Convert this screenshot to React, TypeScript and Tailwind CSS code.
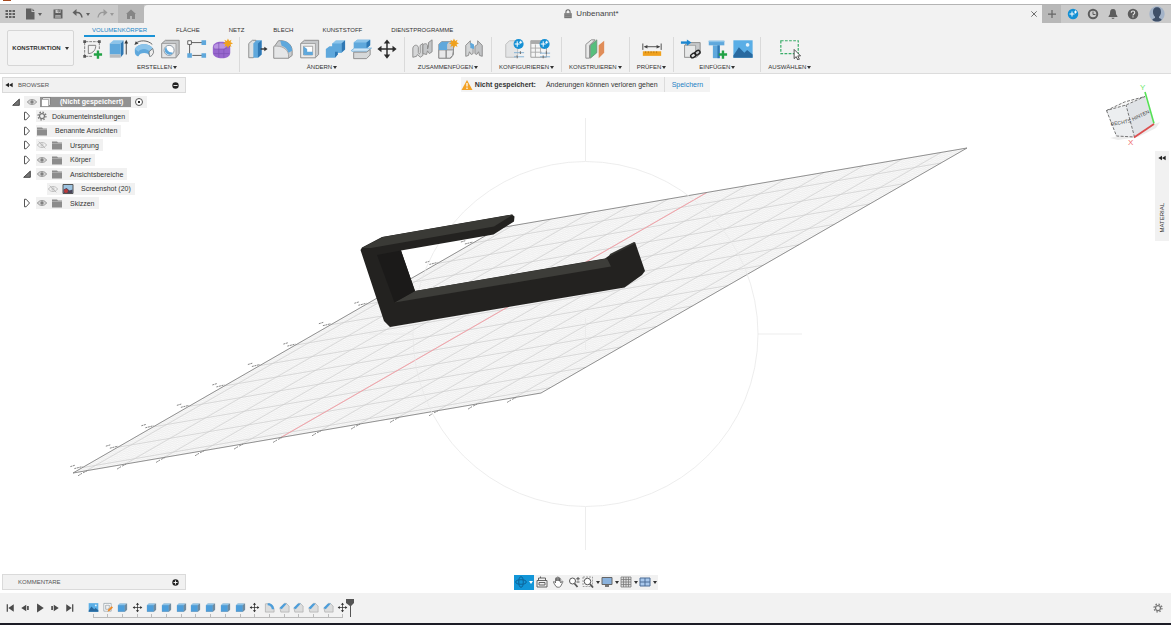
import type { ReactNode } from 'react'

type Point = [number, number]

const BLUE = '#5fa8dc'
const BLUE_LIGHT = '#8cc4ea'
const BLUE_DARK = '#2f78b4'
const GRAY_LINE = '#8a8a8a'

/* ---------- small shared pieces ---------- */

function Icon({ children, className = 'size-6' }: { children: ReactNode; className?: string }) {
  return (
    <svg viewBox="0 0 24 24" className={className} fill="none" aria-hidden="true">
      {children}
    </svg>
  )
}

function Caret({ className = 'text-[#333]' }: { className?: string }) {
  return (
    <svg viewBox="0 0 4 3" className={`w-1 h-[3px] shrink-0 ${className}`} aria-hidden="true">
      <path d="M0 0h4L2 3z" fill="currentColor" />
    </svg>
  )
}

function Star() {
  return (
    <path
      d="M18.500 0.500l1.300 2.700 2.600-1.200-1.100 2.700 2.700 1.100-2.700 1.200 1.100 2.700-2.600-1.200-1.300 2.700-1.200-2.700-2.700 1.200 1.200-2.700-2.700-1.200 2.700-1.100-1.200-2.700 2.700 1.200z"
      fill="#f0a11d"
    />
  )
}

function SparkBadge() {
  return (
    <>
      <circle cx="17" cy="6.500" r="5.500" fill="#1590d4" />
      <path d="M15.500 3.500v6M12.800 6.500h5.400M19.300 3v3.400M17.600 4.700H21" stroke="#fff" strokeWidth="1.100" />
    </>
  )
}

function MoveArrows() {
  return (
    <>
      <path d="M12 4v16M4 12h16" stroke="#2b2b2b" strokeWidth="1.600" />
      <path d="M12 1.500l3.500 4.500h-7zM12 22.500l3.500-4.500h-7zM1.500 12l4.500-3.500v7zM22.500 12l-4.500-3.500v7z" fill="#2b2b2b" />
    </>
  )
}

function PlusMark() {
  return <path d="M18.500 13.500v9M14 18h9" stroke="#22a245" strokeWidth="2.600" />
}

/* ---------- ribbon icons ---------- */

const icons: Record<string, ReactNode> = {
  sketch: (
    <>
      <path d="M4 5v14M5 4h14M5 20h8M20 5v8" stroke="#777" strokeWidth="1" strokeDasharray="3 1" />
      <path d="M8 17V8h8c.5 4-2.500 9-8 9z" stroke="#777" strokeWidth="1" />
      <path d="M2.500 2.500h3v3h-3zM18.500 2.500h3v3h-3zM2.500 18.500h3v3h-3z" fill="#555" />
      <PlusMark />
    </>
  ),
  extrude: (
    <>
      <path d="M3 6l4-3.500h11L15 6z" fill={BLUE_LIGHT} />
      <path d="M15 6l3-3.500v15L15 21z" fill={BLUE_DARK} />
      <path d="M3 6h12v12H3z" fill={BLUE} />
      <path d="M3 18h12v3.500H3z" fill="#b9bcbf" />
      <path d="M21 18V5" stroke="#333" />
      <path d="M21 2l2 4h-4z" fill="#333" />
    </>
  ),
  revolve: (
    <>
      <path d="M2 12C5 5 19 5 22 12v4c-1 3-3 5-4 4-.5-5-11-5-12 0-3 0-4-3-4-5z" fill={BLUE} />
      <path d="M2 12C5 5 19 5 22 12l-4 3c-2-4-10-4-12 0z" fill={BLUE_LIGHT} />
      <path d="M17.500 15l4-3.500 1 4c-1 3-2.500 5-4.500 4.500z" fill="#eee" stroke="#666" strokeWidth=".8" />
      <path d="M3 6c4-4 13-4 18 1" stroke="#444" strokeWidth=".9" />
      <path d="M1.500 7.500L3 3.500 6 6z" fill="#444" />
    </>
  ),
  hole: (
    <>
      <path d="M3 6l4-3.500h15V17l-3.500 4.500H3z" fill="#c4c6c8" stroke={GRAY_LINE} />
      <path d="M3 6h15.500v15.500H3z" fill="#e4e5e6" stroke={GRAY_LINE} strokeWidth=".7" />
      <circle cx="11" cy="13.500" r="5.500" fill="#fff" stroke="#8793a0" />
      <path d="M8 9.500a5 5 0 1 0 7.500 6.500c-4 0-7-2-7.500-6.500z" fill={BLUE} />
    </>
  ),
  pattern: (
    <>
      <path d="M6 5h13M5 6v13M8 19h12" stroke="#555" strokeWidth="1" />
      <path d="M3 3h4v4H3z" fill="#fff" stroke="#555" />
      <path d="M18 2.500h5v5h-5zM2.500 16.500h5v5h-5zM18 16.500h5v5h-5z" fill={BLUE} />
    </>
  ),
  form: (
    <>
      <path d="M2 10c0-4 4-6 9-6s10 2 10 7v5c0 4-4 6-9 6S2 20 2 16z" fill="#9867ce" />
      <path d="M3 9c2-4 12-4 15-1l-4 4H4z" fill="#b994e2" />
      <path d="M3 12h12l6-3M14 12v9.500M8.500 5v16M3 17h17" stroke="#7d52b4" strokeWidth=".7" />
      <Star />
    </>
  ),
  pressPull: (
    <>
      <path d="M3 6l4-3.500h4V18l-3 3.500H3z" fill="#dfe1e2" stroke={GRAY_LINE} />
      <path d="M8 6l3.500-3.500H17V18l-4 3.500H8z" fill={BLUE} />
      <path d="M13 6l4-3.500V18l-4 3.500z" fill={BLUE_DARK} />
      <path d="M16 12h5" stroke="#333" strokeWidth="1.500" />
      <path d="M23.500 12L20 9.500v5z" fill="#333" />
    </>
  ),
  fillet: (
    <>
      <path d="M2 10l5-7c7-1 15 3 15 11v5l-4 3H2z" fill="#c9cbcd" stroke={GRAY_LINE} />
      <path d="M2 9c9-1 15 3 16 9v4H2z" fill="#e5e6e7" stroke={GRAY_LINE} strokeWidth=".7" />
      <path d="M9 3c7-1 13 4 13 11l-4 2c-1-4-4-6.500-7.500-7.500z" fill={BLUE} />
    </>
  ),
  shell: (
    <>
      <path d="M3 6l4-3.500h15.500V18L19 21.500H3z" fill="#c6c8ca" stroke={GRAY_LINE} />
      <path d="M3 6h16v15.500H3z" fill="#ececec" stroke={GRAY_LINE} strokeWidth=".7" />
      <path d="M6 9h10v9.500H6z" fill="#fff" stroke={GRAY_LINE} strokeWidth=".8" />
      <path d="M6 9l4 3v4l-4 2.500z" fill={BLUE} />
      <path d="M6 18.500l4-3.500h6v3.500z" fill={BLUE} />
    </>
  ),
  combine: (
    <>
      <path d="M9 6l4-3.500h10v10L19 16H9z" fill={BLUE_LIGHT} />
      <path d="M19 6l4-3.500v10L19 16z" fill={BLUE_DARK} />
      <path d="M9 6h10v10h-4v2l-3 3.500H2V12l4-3h3z" fill={BLUE} />
      <path d="M12 15h3v3l-3 3.500z" fill={BLUE_DARK} />
    </>
  ),
  split: (
    <>
      <path d="M4 5l4-3h14v6l-4 3.500H4z" fill={BLUE} />
      <path d="M4 5l4-3h14l-4 3z" fill={BLUE_LIGHT} />
      <path d="M18 5l4-3v6l-4 3.500z" fill={BLUE_DARK} />
      <path d="M1.500 13.500L5 11h18.500L19 14.500H2z" fill="#cfe6f6" stroke={BLUE} strokeWidth=".8" />
      <path d="M4 15.500h14l4-3v6l-4 4H4z" fill="#d6d8d9" stroke={GRAY_LINE} />
    </>
  ),
  move: <MoveArrows />,
  joint: (
    <>
      <path d="M2 21V11c1-4 5-4 6-1v6c1 2 1 2 2 0V8l3-2v13l-3 2-3-3-1 2z" fill="#d6d7d8" stroke={GRAY_LINE} />
      <path d="M13 17V9c0-3 4-4 5-1v4l1-2V5l4-3v13l-3 2-2-3-1 4z" fill="#c4c6c8" stroke={GRAY_LINE} />
    </>
  ),
  newComponent: (
    <>
      <path d="M2 7l3-3h13v14l-3 4H2z" fill="#c9cbcd" stroke={GRAY_LINE} />
      <path d="M2 13h8v9H2zM10 13h8l-1 6-3 3h-4z" fill="#e8e8e9" stroke={GRAY_LINE} />
      <path d="M2 7l3-3h8l-2 3v6H2z" fill={BLUE} />
      <Star />
    </>
  ),
  rigidJoint: (
    <>
      <path d="M3 20V8l5-5v4l3 2v8l-2 1-2-3-1 4z" fill="#d3d5d6" stroke={GRAY_LINE} />
      <path d="M21 20V8l-5-5v4l-3 2v8l2 1 2-3 1 4z" fill="#c2c4c6" stroke={GRAY_LINE} />
      <path d="M8 5l4 2v5l-4-1z" fill={BLUE} />
    </>
  ),
  configure: (
    <>
      <path d="M3 7l4-4h9v15l-2 3H3z" fill="#e3e4e5" stroke="#bbb" />
      <path d="M12 16h11M12 20.500h11" stroke="#7eaed2" />
      <path d="M19 14.500v3M15.500 19v3" stroke="#777" strokeWidth="1.300" />
      <SparkBadge />
    </>
  ),
  configTable: (
    <>
      <path d="M2 3h17v18H2z" fill="#f5f5f5" stroke="#999" />
      <path d="M2 3h12v3.500H2z" fill="#aaa" />
      <path d="M2 11h15M2 15.500h12M7 7v14M12.500 7v10" stroke="#aaa" />
      <path d="M12 16.500h11M12 20.500h11" stroke="#7eaed2" />
      <path d="M19 14.500v3M15.500 19v3" stroke="#777" strokeWidth="1.300" />
      <SparkBadge />
    </>
  ),
  plane: (
    <>
      <path d="M2 7l6-5h4L6 8v14H2z" fill="#e8e8e8" stroke={GRAY_LINE} />
      <path d="M7 8l7-6v14l-7 6z" fill="#56bf7d" stroke="#6e8576" strokeWidth=".8" />
      <path d="M16 8l6-5v13l-6 6z" fill="#e08d59" />
    </>
  ),
  measure: (
    <>
      <path d="M2 6v7M22 6v7M4 9.500h16" stroke="#444" />
      <path d="M3 9.500l4-2v4zM21 9.500l-4-2v4z" fill="#444" />
      <path d="M2 14.500h20v5H2z" fill="#f0a11d" />
      <path d="M5 14.500v2M8 14.500v2M11 14.500v2M14 14.500v2M17 14.500v2" stroke="#b06f08" strokeWidth=".8" />
    </>
  ),
  insertDerive: (
    <>
      <path d="M5 8l4-3h13v12l-4 4H5z" fill="#c6c8ca" stroke={GRAY_LINE} />
      <path d="M5 8h12v13H5z" fill="#e7e8e8" stroke={GRAY_LINE} strokeWidth=".7" />
      <path d="M1 5h8" stroke="#1c86d0" strokeWidth="2.600" />
      <path d="M12.500 5L7.500 1.500v7z" fill="#1c86d0" />
      <g stroke="#222" strokeWidth="1.500">
        <rect x="11.500" y="17" width="6" height="4" rx="2" transform="rotate(-35 14.500 19)" />
        <rect x="16" y="14" width="6" height="4" rx="2" transform="rotate(-35 19 16)" />
      </g>
    </>
  ),
  fastener: (
    <>
      <path d="M3 3h17v5H3z" fill={BLUE} />
      <path d="M3 3h17v1.500H3z" fill={BLUE_LIGHT} />
      <path d="M7.500 8H15v14H7.500z" fill={BLUE} />
      <path d="M12.500 8H15v14h-2.500z" fill={BLUE_DARK} />
      <PlusMark />
    </>
  ),
  picture: (
    <>
      <path d="M1.500 2.500h21v19h-21z" fill="#5aaee6" />
      <circle cx="17" cy="7.500" r="2" fill="#e5f2fb" />
      <path d="M1.500 19l6-9 6 6 3-3 6 5v3.500h-21z" fill="#28699f" />
    </>
  ),
  select: (
    <>
      <path d="M2 3h19v14H2z" stroke="#39ad69" strokeWidth="1.300" strokeDasharray="3 1.500" />
      <path d="M16.500 12.500v10l2.300-2.200 1.700 3.700 1.700-.8-1.700-3.700h3z" fill="#fff" stroke="#333" strokeWidth=".9" />
    </>
  ),
  cube: (
    <>
      <path d="M2 7l4-4h16v14l-5 5H2z" fill="#a9b3ba" />
      <path d="M2 7l4-4h15l-4 4z" fill={BLUE_LIGHT} />
      <path d="M2 7h15v14H2z" fill="#4c9edb" />
      <path d="M17 7l5-4v14l-5 4z" fill="#6f8ba0" />
    </>
  ),
  sketchSmall: (
    <>
      <path d="M4 3h16v17H4zM8 7v9h4c5 0 4-6 4-9z" fill="#fff" stroke="#8b97a0" strokeWidth="1.500" />
      <path d="M12 21l2-5 7-7 3 3-7 7z" fill="#ec8a28" />
    </>
  ),
  filletSmall: (
    <>
      <path d="M3 4c10-2 19 4 19 13v5H3z" fill="#dcdddd" stroke="#aaa" strokeWidth="1.500" />
      <path d="M8 3c8-1 14 5 14 13h-5c0-5-4-9-9-9z" fill="#4c9edb" />
    </>
  ),
  chamferSmall: (
    <>
      <path d="M2 13L12 3h4l6 6v13H4z" fill="#dcdddd" stroke="#aaa" strokeWidth="1.500" />
      <path d="M1 13L11 3h6L6 16z" fill="#4c9edb" />
    </>
  ),
}

const ribbonTabs = ['VOLUMENKÖRPER', 'FLÄCHE', 'NETZ', 'BLECH', 'KUNSTSTOFF', 'DIENSTPROGRAMME']

const toolGroups = [
  { label: 'ERSTELLEN', tools: ['sketch', 'extrude', 'revolve', 'hole', 'pattern', 'form'] },
  { label: 'ÄNDERN', tools: ['pressPull', 'fillet', 'shell', 'combine', 'split', 'move'] },
  { label: 'ZUSAMMENFÜGEN', tools: ['joint', 'newComponent', 'rigidJoint'] },
  { label: 'KONFIGURIEREN', tools: ['configure', 'configTable'] },
  { label: 'KONSTRUIEREN', tools: ['plane'] },
  { label: 'PRÜFEN', tools: ['measure'] },
  { label: 'EINFÜGEN', tools: ['insertDerive', 'fastener', 'picture'] },
  { label: 'AUSWÄHLEN', tools: ['select'] },
]

const timeline = [
  'picture', 'sketchSmall', 'cube', 'move', 'cube', 'cube', 'cube', 'cube', 'cube', 'cube', 'cube',
  'move', 'filletSmall', 'chamferSmall', 'chamferSmall', 'chamferSmall', 'chamferSmall', 'move',
]

/* ---------- title bar ---------- */

function TitleBar() {
  return (
    <header className="shrink-0">
      <div className="h-1 bg-white pl-[3px]">
        <div className="w-2 h-px bg-[#a5481d]" />
      </div>
      <div className="flex h-[19px] border-t border-[#b4b4b4] bg-[#cacaca] text-[#606060]">
        <div className="flex items-center pl-1">
          <button type="button" aria-label="Datengruppe" className="w-3">
            <Icon className="size-3">
              <path
                d="M3 4h5v4H3zM10 4h5v4h-5zM17 4h5v4h-5zM3 10h5v4H3zM10 10h5v4h-5zM17 10h5v4h-5zM3 16h5v4H3zM10 16h5v4h-5zM17 16h5v4h-5z"
                fill="currentColor"
              />
            </Icon>
          </button>
          <button type="button" aria-label="Datei" className="ml-2 flex items-center gap-0.5">
            <Icon className="size-3">
              <path d="M4 1h11v7h6v15H4zM17 1l4 5h-4z" fill="currentColor" />
            </Icon>
            <Caret className="text-[#606060]" />
          </button>
          <button type="button" aria-label="Speichern" className="ml-2.5">
            <Icon className="size-3">
              <path d="M3 3h18v18H3z" fill="currentColor" />
              <path d="M7 4h10v6H7zM7 14h10v6H7z" fill="#cacaca" />
              <path d="M8 16h8M8 18.500h8M12 4h3v4h-3z" stroke="currentColor" strokeWidth="1.300" />
            </Icon>
          </button>
          <button type="button" aria-label="Rückgängig" className="ml-2 flex items-center gap-0.5">
            <Icon className="size-3">
              <path d="M8 9c8-1 11 3 12 10" stroke="currentColor" strokeWidth="3" />
              <path d="M1 9l8-7v14z" fill="currentColor" />
            </Icon>
            <Caret className="text-[#606060]" />
          </button>
          <button type="button" aria-label="Wiederherstellen" className="ml-1.5 flex items-center gap-0.5 text-[#999]">
            <Icon className="size-3">
              <path d="M16 9C8 8 5 12 4 19" stroke="currentColor" strokeWidth="2.500" />
              <path d="M23 9l-8-7v14z" fill="currentColor" />
            </Icon>
            <Caret className="text-[#999]" />
          </button>
        </div>
        <button type="button" aria-label="Startseite" className="ml-1 flex w-[26px] items-center justify-center bg-[#b8b8b8]">
          <Icon className="size-3">
            <path d="M12 3l10 9h-2v10h-6v-6h-4v6H4V12H2z" fill="#858585" />
          </Icon>
        </button>
        <div className="flex flex-1 items-center rounded-tl bg-[#f2f2f2] pr-1 pl-2">
          <div className="flex flex-1 items-center justify-center gap-[3px] text-[8px] leading-[10px] text-[#444]">
            <Icon className="size-2.5">
              <path d="M7 11V7a5 5 0 0 1 10 0v4" stroke="#666" strokeWidth="2.500" />
              <path d="M3 10h18v12H3z" fill="#777" />
              <path d="M5 14h14M5 18h14" stroke="#aaa" />
            </Icon>
            Unbenannt*
          </div>
          <button type="button" aria-label="Schließen">
            <Icon className="size-2">
              <path d="M4 4l16 16M20 4L4 20" stroke="#555" strokeWidth="2.500" />
            </Icon>
          </button>
        </div>
        <button type="button" aria-label="Neuer Entwurf" className="flex w-[19px] items-center justify-center bg-[#b8b8b8]">
          <Icon className="size-3">
            <path d="M12 4v16M4 12h16" stroke="#666" strokeWidth="2.500" />
          </Icon>
        </button>
        <div className="flex items-center gap-2 px-1.5">
          <button type="button" aria-label="Erweiterungen">
            <Icon className="size-3">
              <circle cx="12" cy="12" r="10.500" fill="#1590d4" />
              <path d="M10 7v10M5 12h10M17 5v6M14 8h6" stroke="#fff" strokeWidth="2" />
            </Icon>
          </button>
          <button type="button" aria-label="Auftragsstatus">
            <Icon className="size-3">
              <circle cx="12" cy="12" r="10.500" fill="#5c5c5c" />
              <circle cx="12" cy="12" r="6.500" fill="#cacaca" />
              <path d="M12 7v6h5" stroke="#5c5c5c" strokeWidth="2" />
            </Icon>
          </button>
          <button type="button" aria-label="Benachrichtigungen">
            <Icon className="size-3">
              <path d="M12 2c5 0 6 4 6 9 0 3 3 4 3 7H3c0-3 3-4 3-7 0-5 1-9 6-9zM9 19.500h6c0 3-6 3-6 0z" fill="#5c5c5c" />
            </Icon>
          </button>
          <button type="button" aria-label="Hilfe">
            <Icon className="size-3">
              <circle cx="12" cy="12" r="10.500" fill="#5c5c5c" />
              <path d="M8.500 9.500c0-4.500 7-4.500 7 0 0 2.500-3.500 2.500-3.500 5.500M12 16.500v2.500" stroke="#e6e6e6" strokeWidth="2.200" />
            </Icon>
          </button>
          <button type="button" aria-label="Konto" className="ml-0.5">
            <Icon className="size-4">
              <circle cx="12" cy="12" r="11.500" fill="#a3b3c8" />
              <path d="M12 2c5 0 6 4 6 7s-1 5-3 7v2c3 1 4 2 4 3-4 3-10 3-14 0 0-1 1-2 4-3v-2c-2-2-3-4-3-7s1-7 6-7z" fill="#3e4f68" />
            </Icon>
          </button>
        </div>
      </div>
    </header>
  )
}

/* ---------- ribbon ---------- */

function Ribbon() {
  return (
    <section className="flex h-[51px] shrink-0 border-b border-[#dcdcdc] bg-[#f2f2f2] text-[6px] leading-[10px] text-[#333]">
      <div className="w-[75px] shrink-0 pt-[7px] pl-[7px]">
        <button
          type="button"
          className="flex h-9 w-[67px] items-center justify-center gap-1 rounded-xs border border-[#d6d6d6] bg-[#f4f4f4] font-bold"
        >
          KONSTRUKTION
          <Caret />
        </button>
      </div>
      <div>
        <nav className="flex h-3.5 gap-[13px] pl-[9px]">
          {ribbonTabs.map((tab, i) => (
            <button
              key={tab}
              type="button"
              className={`border-b-2 px-2 pt-[2px] ${i === 0 ? 'border-[#1b93d6] text-[#1b86c6]' : 'border-transparent'}`}
            >
              {tab}
            </button>
          ))}
        </nav>
        <div className="flex">
          {toolGroups.map((group) => (
            <div
              key={group.label}
              className="flex flex-col items-center border-r border-[#dadada] px-1 last:border-r-0"
            >
              <div className="flex pb-px">
                {group.tools.map((tool) => (
                  <button key={tool} type="button" aria-label={tool} className="flex h-6 w-[26px] items-center justify-center">
                    <Icon className="size-[22px]">{icons[tool]}</Icon>
                  </button>
                ))}
              </div>
              <button type="button" className="flex items-center gap-px px-[3px]">
                {group.label}
                <Caret />
              </button>
            </div>
          ))}
        </div>
      </div>
    </section>
  )
}

/* ---------- browser tree ---------- */

function Eye({ hidden = false }: { hidden?: boolean }) {
  return (
    <Icon className="size-2.5">
      <path
        d="M1 12C6 4 18 4 23 12 18 20 6 20 1 12z"
        fill={hidden ? 'none' : '#d4d4d4'}
        stroke={hidden ? '#b5b5b5' : '#8d8d8d'}
        strokeWidth="2"
      />
      <circle cx="12" cy="12" r="4" fill={hidden ? '#ccc' : '#808080'} />
      {hidden && <path d="M4 4l16 16" stroke="#b5b5b5" strokeWidth="2" />}
    </Icon>
  )
}

function Folder() {
  return (
    <Icon className="size-3">
      <path d="M2 5h10l2 2h8v14H2z" fill="#8c8c8c" />
      <path d="M2 9h20" stroke="#b5b5b5" strokeWidth="1.500" />
    </Icon>
  )
}

function Toggle({ open = false }: { open?: boolean }) {
  return (
    <button type="button" aria-label={open ? 'Einklappen' : 'Ausklappen'} className="shrink-0">
      <Icon className="size-2.5">
        {open ? (
          <path d="M20 5v15H4z" fill="#777" stroke="#333" strokeWidth="2" />
        ) : (
          <path d="M6 3v18h4l8-9-8-9z" fill="#fff" stroke="#333" strokeWidth="2" />
        )}
      </Icon>
    </button>
  )
}

function Gear({ className = 'size-3' }: { className?: string }) {
  return (
    <Icon className={className}>
      <circle cx="12" cy="12" r="6" stroke="#777" strokeWidth="3" />
      <circle cx="12" cy="12" r="9.500" stroke="#777" strokeWidth="3" strokeDasharray="3.700 3.760" />
    </Icon>
  )
}

const treeRows = [
  { label: 'Dokumenteinstellungen', icon: 'gear' },
  { label: 'Benannte Ansichten', icon: 'folder' },
  { label: 'Ursprung', icon: 'folder', eye: 'off' },
  { label: 'Körper', icon: 'folder', eye: 'on' },
  { label: 'Ansichtsbereiche', icon: 'folder', eye: 'on', open: true },
  { label: 'Screenshot (20)', icon: 'image', eye: 'off', child: true },
  { label: 'Skizzen', icon: 'folder', eye: 'on' },
]

function PanelHeader({ title, open }: { title: string; open: boolean }) {
  return (
    <div className="flex h-4 w-[184px] items-center border border-[#dadada] bg-[#f1f1f1] text-[6px] leading-[10px] text-[#555]">
      <span className="w-[15px] pl-0.5">
        {open && (
          <Icon className="size-2">
            <path d="M12 5v14L1 12zM23 5v14l-11-7z" fill="#222" />
          </Icon>
        )}
      </span>
      <span className="flex-1">{title}</span>
      <button type="button" aria-label={open ? `${title} schließen` : `${title} öffnen`} className="pr-1.5">
        <Icon className="size-[7px]">
          <circle cx="12" cy="12" r="11" fill="#222" />
          <path d={open ? 'M5 12h14' : 'M5 12h14M12 5v14'} stroke="#fff" strokeWidth="3" />
        </Icon>
      </button>
    </div>
  )
}

function Browser() {
  return (
    <aside>
      <PanelHeader title="BROWSER" open />
      <ul className="mt-0.5 flex h-[115px] flex-col justify-between pl-[9px] text-[7px] leading-[13px] text-[#333]">
        <li className="flex h-[13px] items-center">
          <Toggle open />
          <span className="ml-[3px] flex h-3 items-center bg-[#f1f1f1]">
            <span className="flex w-4 justify-center">
              <Eye />
            </span>
            <span className="flex h-2.5 w-[91px] items-center bg-[#929292] font-bold text-white">
              <Icon className="size-3">
                <path d="M3 7l4-4h14v14l-4 4H3z" fill="#ddd" stroke="#555" />
                <path d="M3 7h14v14H3z" fill="#fff" stroke="#777" />
              </Icon>
              <span className="ml-2">(Nicht gespeichert)</span>
            </span>
            <span className="flex w-4 justify-center">
              <input
                type="radio"
                name="active-component"
                aria-label="Komponente aktivieren"
                defaultChecked
                className="size-2 appearance-none rounded-full border border-[#555] bg-white bg-[radial-gradient(circle,#222_25%,transparent_35%)]"
              />
            </span>
          </span>
        </li>
        {treeRows.map((row) => (
          <li key={row.label} className={`flex h-[13px] items-center ${row.child ? 'pl-9' : 'pl-[11px]'}`}>
            {!row.child && <Toggle open={row.open} />}
            <span className={`flex h-3 items-center gap-[3px] bg-[#f1f1f1] pr-1 ${row.child ? '' : 'ml-1'}`}>
              {row.eye && (
                <span className="flex w-3 justify-center">
                  <Eye hidden={row.eye === 'off'} />
                </span>
              )}
              {row.icon === 'gear' && <Gear className="ml-px size-2.5" />}
              {row.icon === 'folder' && <Folder />}
              {row.icon === 'image' && (
                <Icon className="size-3">
                  <path d="M2 3h20v18H2z" fill="#9dc3e0" stroke="#555" strokeWidth="2" />
                  <path d="M3 20v-7l6-3 6 5 6-2v7z" fill="#4a4458" />
                  <circle cx="8" cy="16" r="4" fill="#b93a3a" />
                </Icon>
              )}
              <span className={row.icon === 'gear' ? 'ml-0.5' : 'ml-1'}>{row.label}</span>
            </span>
          </li>
        ))}
      </ul>
    </aside>
  )
}

/* ---------- 3D scene ---------- */

const origin: Point = [73, 473]
const alongU: Point = [468, -80]
const alongV: Point = [426, -245]

function planePoint(u: number, v: number): Point {
  return [origin[0] + u * alongU[0] + v * alongV[0], origin[1] + u * alongU[1] + v * alongV[1]]
}

function planeLine(from: Point, to: Point) {
  return `M${from.map((n) => n.toFixed(1)).join(' ')}L${to.map((n) => n.toFixed(1)).join(' ')}`
}

function gridPath(step: number, offsetU: number, offsetV: number) {
  const parts: string[] = []
  for (let u = offsetU; u < 1; u += step) parts.push(planeLine(planePoint(u, 0), planePoint(u, 1)))
  for (let v = offsetV; v < 1; v += step) parts.push(planeLine(planePoint(0, v), planePoint(1, v)))
  return parts.join('')
}

function Scene() {
  const ticks = Array.from({ length: 12 }, (_, i) => i / 12)
  return (
    <svg viewBox="0 74 1171 519" className="absolute inset-0 size-full" fill="none" aria-label="3D-Ansicht">
      <path d="M73 473L541 393 967 148 499 228z" fill="#fcfcfc" />
      <path d={gridPath(1 / 96, 0, 0)} stroke="#e6e6e6" strokeWidth=".4" />
      <path d={gridPath(1 / 12, 0.028, 0.022)} stroke="#cdcdcd" strokeWidth=".7" />
      <path d={planeLine(planePoint(0.444, 0), planePoint(0.444, 1))} stroke="#f79aa2" strokeWidth=".9" />
      <path d="M73 473L541 393 967 148 499 228z" stroke="#858585" strokeWidth=".9" />
      {ticks.map((t) => {
        const [bx, by] = planePoint(t + 0.028, 0)
        const [lx, ly] = planePoint(0, t + 0.022)
        return (
          <g key={t} stroke="#888">
            <path d={`M${bx - 8} ${by + 5}l4-2.500M${bx - 3} ${by + 2}l4-2`} strokeDasharray="2 .6" />
            <path d={`M${lx - 12} ${ly - 1}l5-1.500M${lx - 8} ${ly + 1}l8-2`} strokeDasharray="2 .6" />
          </g>
        )
      })}

      <g stroke="#e8e8e8" strokeWidth=".8">
        <circle cx="585.500" cy="334" r="172.500" />
        <path d="M585.500 118v43M585.500 507v43M758 334h44M369 334h44M585.500 318v32" />
      </g>

      {/* hook body */}
      <path
        d="M360.500 250L362 247.500 382 237 512 214.500 514.500 216.500 514 221.500 493.500 234.500 401 250.500 415 291 605 258.500 610 255 635 242 645 271 642 275 624.500 287.500 390 327 384 321z"
        fill="#232220"
      />
      <path d="M362 248L383 237 513 214.500 494 226.500 371 248z" fill="#3a3a36" />
      <path d="M394.500 302.500L415 291 607 258.500 611 266.500z" fill="#3d3d39" />
      <path d="M377 255l24-4.500 14 40.500-20.500 11.500z" fill="#1b1a19" />
      <path d="M609 256.500l1-2.500 24-12 1 1.500z" fill="#353531" />
    </svg>
  )
}

function ViewCube() {
  return (
    <svg viewBox="1104 76 60 68" className="mt-0.5 mr-[7px] h-[68px] w-[60px]" aria-label="ViewCube">
      <path d="M1112 135l24-6 26-10-4 6-18 9-20 3z" fill="#ececec" />
      <path d="M1108.500 107.500l19.500-5.500 8.500 32-18-1z" fill="#eceef0" />
      <path d="M1128 102l19-8.500 9 27.500-19.500 13z" fill="#e0e3e7" />
      <path d="M1108.500 107.500l18-8.500 20.500-5.500-19 8.500z" fill="#f7f7f7" />
      <path
        d="M1108.500 107.500l18-8.500 20.500-5.500-19 8.500zM1108.500 107.500l10 25.500 18 1-8.500-32"
        fill="none"
        stroke="#666"
        strokeWidth=".9"
        strokeDasharray="3 1.500"
      />
      <path d="M1147 89l9 31.500" stroke="#55e055" strokeWidth="1.600" />
      <path d="M1156 121l-20 13.500" stroke="#dc4f4f" strokeWidth="1.800" />
      <g fontFamily="Liberation Sans Narrow, Liberation Sans, sans-serif" fontSize="5" fill="#444">
        <text x="1113" y="123" transform="rotate(-10 1113 123)">RECHTS</text>
        <text x="1135" y="118" transform="rotate(-26 1135 118)">HINTEN</text>
      </g>
      <g fontFamily="Liberation Sans, sans-serif" fontSize="8">
        <text x="1142" y="87" fill="#6be86b">Y</text>
        <text x="1130" y="142" fill="#ee6a6a">X</text>
      </g>
    </svg>
  )
}

/* ---------- navigation bar ---------- */

function NavBar() {
  return (
    <div className="flex h-[15px] items-center bg-[#f1f1f1] text-[#555]">
      <button type="button" aria-label="Orbit" className="flex h-full w-5 items-center justify-center gap-0.5 bg-[#1296d8]">
        <Icon className="size-3">
          <ellipse cx="12" cy="12" rx="10.500" ry="4.500" stroke="#0d5f92" strokeWidth="1.800" />
          <ellipse cx="12" cy="12" rx="4.500" ry="10.500" stroke="#0d5f92" strokeWidth="1.800" />
        </Icon>
        <Caret className="text-white" />
      </button>
      <button type="button" aria-label="Ausrichten" className="flex w-4 justify-center">
        <Icon className="size-3">
          <path d="M2 9h20v13H2zM6 13h12v5H6z" stroke="currentColor" strokeWidth="1.800" />
          <path d="M5 9V4h14v5M9 4V1" stroke="currentColor" strokeWidth="1.800" />
        </Icon>
      </button>
      <button type="button" aria-label="Pan" className="flex w-4 justify-center">
        <Icon className="size-3">
          <path
            d="M7 14V5c0-2 2.500-2 2.500 0v5V3.500c0-2 2.700-2 2.700 0V10 4c0-2 2.700-2 2.700 0v6.500-4c0-2 2.600-2 2.600 0V14l2-3c1-1.500 3-.5 2 1.500L17 21c-2 2-7 2-9 0l-5-8c-1-2 1.500-3 2.500-1z"
            fill="#fff"
            stroke="currentColor"
            strokeWidth="1.600"
          />
        </Icon>
      </button>
      <button type="button" aria-label="Zoom" className="flex w-4 justify-center">
        <Icon className="size-3">
          <circle cx="9" cy="10" r="6" fill="#fff" stroke="currentColor" strokeWidth="2" />
          <path d="M13 15l6 7" stroke="currentColor" strokeWidth="3.500" />
          <path d="M20 2v7M16.500 5.500h7M17 12h6" stroke="currentColor" strokeWidth="2" />
        </Icon>
      </button>
      <button type="button" aria-label="Einpassen" className="flex w-[19px] items-center justify-center gap-0.5">
        <Icon className="size-3">
          <path d="M2 2h19v19H2z" stroke="#888" strokeWidth="1.500" strokeDasharray="4 2" />
          <circle cx="11" cy="11" r="6.500" fill="#fff" stroke="currentColor" strokeWidth="2" />
          <path d="M16 16l6 7" stroke="currentColor" strokeWidth="3.500" />
        </Icon>
        <Caret />
      </button>
      <button type="button" aria-label="Anzeigeeinstellungen" className="flex w-[19px] items-center justify-center gap-0.5">
        <Icon className="size-3">
          <path d="M2 3h20v14H2z" fill="#8ab2dd" stroke="#666" strokeWidth="2" />
          <path d="M8 18h8v4H8z" fill="#777" />
        </Icon>
        <Caret />
      </button>
      <button type="button" aria-label="Raster und Fangen" className="flex w-[19px] items-center justify-center gap-0.5">
        <Icon className="size-3">
          <path d="M2 2h20v20H2zM7 2v20M12 2v20M17 2v20M2 7h20M2 12h20M2 17h20" fill="#ddd" stroke="#777" strokeWidth="1.500" />
        </Icon>
        <Caret />
      </button>
      <button type="button" aria-label="Ansichtsfenster" className="flex w-[19px] items-center justify-center gap-0.5">
        <Icon className="size-3">
          <path d="M2 4h20v16H2zM12 4v16M2 12h20" fill="#a9c8ec" stroke="#4d6c96" strokeWidth="2" />
        </Icon>
        <Caret />
      </button>
    </div>
  )
}

/* ---------- viewport with its panels ---------- */

function Viewport() {
  return (
    <main className="relative flex flex-1 flex-col justify-between bg-white">
      <Scene />
      <div className="relative grid grid-cols-[1fr_auto_1fr] items-start px-0.5 pt-[3px]">
        <Browser />
        <div role="status" className="flex h-[15px] items-center bg-[#f3f3f3] text-[7px] leading-[10px] text-[#333]">
          <Icon className="size-3">
            <path d="M12 2l11 20H1z" fill="#f2a125" />
            <path d="M12 8v7M12 17v3" stroke="#fff" strokeWidth="2.500" />
          </Icon>
          <strong className="ml-0.5">Nicht gespeichert:</strong>
          <span className="ml-2.5 pr-1.5">Änderungen können verloren gehen</span>
          <a href="#speichern" className="flex h-full items-center border-l border-[#dcdcdc] px-[7px] text-[#1b7fc4]">
            Speichern
          </a>
        </div>
        <div className="flex flex-col items-end">
          <ViewCube />
          <aside className="mt-1 flex h-[90px] w-3.5 flex-col items-center justify-between bg-[#f1f1f1] pt-[3px] pb-2">
            <button type="button" aria-label="Material einblenden">
              <Icon className="size-2">
                <path d="M12 5v14L1 12zM23 5v14l-11-7z" fill="#222" />
              </Icon>
            </button>
            <span className="rotate-180 text-[6px] leading-[8px] text-[#333] [writing-mode:vertical-rl]">MATERIAL</span>
          </aside>
        </div>
      </div>
      <div className="relative grid grid-cols-[1fr_auto_1fr] items-center px-0.5 pb-[3px]">
        <PanelHeader title="KOMMENTARE" open={false} />
        <NavBar />
      </div>
    </main>
  )
}

/* ---------- timeline ---------- */

const playback = [
  { label: 'Anfang', d: 'M4 3h3v18H4zM21 3v18L8 12z' },
  { label: 'Schritt zurück', d: 'M15 4v16L3 12zM17 7h4v10h-4z' },
  { label: 'Abspielen', d: 'M5 1v22l16-11z' },
  { label: 'Schritt vor', d: 'M9 4v16l12-8zM3 7h4v10H3z' },
  { label: 'Ende', d: 'M17 3h3v18h-3zM3 3v18l13-9z' },
]

function Timeline() {
  return (
    <footer className="flex h-8 shrink-0 items-center border-b-2 border-[#1c1c26] bg-[#f2f2f2] pl-[5px]">
      <div className="flex gap-[5px]">
        {playback.map((item) => (
          <button key={item.label} type="button" aria-label={item.label}>
            <Icon className="size-2.5">
              <path d={item.d} fill="#4a4a4a" />
            </Icon>
          </button>
        ))}
      </div>
      <div className="ml-3 w-[262px] pt-1">
        <div className="flex justify-between">
          {timeline.map((name, i) => (
            <button key={i} type="button" aria-label={name} className="flex w-3 flex-col items-center">
              <Icon className="size-[11px]">{icons[name]}</Icon>
              <span className="mt-px h-[3px] w-px bg-[#bbb]" />
            </button>
          ))}
        </div>
        <div className="mx-1.5 h-px bg-[#bbb]" />
      </div>
      <svg viewBox="0 0 10 18" className="-ml-1 h-[18px] w-2.5" aria-hidden="true">
        <path d="M1 0h8v4L6 7v11H5V7L1 4z" fill="#555" />
      </svg>
      <button type="button" aria-label="Einstellungen" className="mr-2 ml-auto">
        <Gear className="size-2.5" />
      </button>
    </footer>
  )
}

export default function App() {
  return (
    <div className="flex min-h-screen flex-col bg-white font-['Liberation_Sans',Arial,sans-serif]">
      <TitleBar />
      <Ribbon />
      <Viewport />
      <Timeline />
    </div>
  )
}
